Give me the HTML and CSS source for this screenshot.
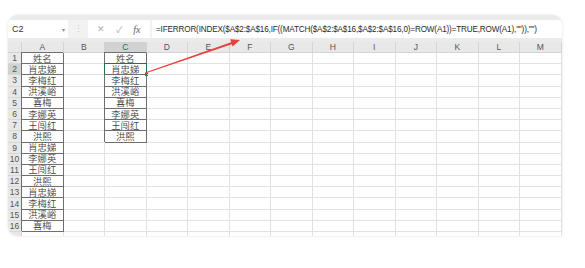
FILE: index.html
```html
<!DOCTYPE html>
<html lang="zh">

<head>
    <meta charset="UTF-8">
    <title>Excel - 去重公式</title>
    <link rel="stylesheet" href="styles.css">
</head>

<body>
    <div class="page">
        <div class="sheet">
            <div class="toolbar">
                <div class="namebox"><span>C2</span><span class="caret">▾</span></div>
                <div class="sep">⋮</div>
                <div class="fx-btns">
                    <span class="btn">✕</span>
                    <span class="btn">✓</span>
                    <span class="fx">fx</span>
                </div>
                <div class="formula">=IFERROR(INDEX($A$2:$A$16,IF((MATCH($A$2:$A$16,$A$2:$A$16,0)=ROW(A1))=TRUE,ROW(A1),"")),"")</div>
            </div>
            <div class="grid" id="grid">
                <!-- cells built below -->
            </div>
        </div>

        <svg class="arrow" width="585" height="268" viewBox="0 0 585 268">
            <polygon points="145,72.6 231.8,42.1 232.4,44.1 145.3,73.6" fill="#e5403b" />
            <polygon points="240,40 232.6,46.6 230.2,39.3" fill="#e5403b" />
        </svg>
    </div>

    <script>
        const cols = ['A', 'B', 'C', 'D', 'E', 'F', 'G', 'H', 'I', 'J', 'K', 'L', 'M'];
        const colA = ['姓名', '肖忠娣', '李梅红', '洪溪峪', '喜梅', '李娜英', '王闯红', '洪熙',
            '肖忠娣', '李娜英', '王闯红', '洪熙', '肖忠娣', '李梅红', '洪溪峪', '喜梅'];
        const colC = ['姓名', '肖忠娣', '李梅红', '洪溪峪', '喜梅', '李娜英', '王闯红', '洪熙'];

        const grid = document.getElementById('grid');

        function addCell(cls, text) {
            const cell = document.createElement('div');
            cell.className = cls;
            if (text) cell.textContent = text;
            grid.appendChild(cell);
            return cell;
        }

        // header row
        addCell('corner');
        cols.forEach(c => addCell(c === 'C' ? 'col-head active' : 'col-head', c));

        // rows 1..16, plus an empty sliver of row 17 at the sheet edge
        for (let r = 1; r <= 17; r++) {
            addCell(r === 2 ? 'row-head active' : 'row-head', r <= 16 ? String(r) : '');
            cols.forEach(c => {
                let cls = 'cell';
                let text = '';
                if (c === 'A' && r <= 16) {
                    cls += ' boxed';
                    text = colA[r - 1];
                }
                if (c === 'C' && r <= 8) {
                    cls += ' boxed';
                    text = colC[r - 1];
                }
                const cell = addCell(cls, text);
                if (c === 'C' && r === 2) {
                    const sel = document.createElement('span');
                    sel.className = 'selection';
                    cell.appendChild(sel);
                }
            });
        }
    </script>
</body>

</html>
```

FILE: styles.css
```css
body {
    margin: 0;
    background: #fff;
    font-family: 'Liberation Sans', 'Noto Sans CJK SC', sans-serif;
}

.page {
    position: relative;
    width: 585px;
    height: 268px;
    padding: 15px 0 0 8px;
    box-sizing: border-box;
}

.sheet {
    width: 554px;
    height: 221px;
    padding-top: 5px;
    box-sizing: border-box;
    background: #ebebeb;
    border-radius: 10px 10px 0 10px;
    overflow: hidden;
    box-shadow: 0 0 3px rgba(0, 0, 0, 0.12);
}

/* formula bar */
.toolbar {
    display: flex;
    height: 18px;
    background: #f2f2f2;
    font-size: 9px;
    color: #333;
}

.namebox {
    width: 60px;
    display: flex;
    align-items: center;
    justify-content: space-between;
    padding: 0 3px 0 4px;
    box-sizing: border-box;
    background: #fff;
}

.caret {
    font-size: 6px;
    color: #888;
}

.sep {
    width: 20px;
    display: flex;
    align-items: center;
    justify-content: center;
    color: #c8c8c8;
    font-size: 9px;
}

.fx-btns {
    width: 62px;
    display: flex;
    align-items: center;
    justify-content: space-around;
    padding: 0 4px;
    box-sizing: border-box;
    background: #fff;
    color: #b0b0b0;
    font-size: 9px;
}

.fx {
    font-family: 'Liberation Serif', serif;
    font-style: italic;
    color: #666;
    font-size: 10px;
}

.formula {
    flex: 1;
    margin-left: 2px;
    display: flex;
    align-items: center;
    padding-left: 4px;
    background: #fff;
    font-size: 8.15px;
    letter-spacing: -0.15px;
    white-space: nowrap;
    overflow: hidden;
    color: #2a2a2a;
}

/* grid */
.grid {
    margin-top: 4px;
    display: grid;
    grid-template-columns: 14px repeat(13, 41.5px);
    grid-template-rows: 11px repeat(17, 11.2px);
    background: #fff;
    font-size: 9px;
}

.corner,
.col-head,
.row-head {
    background: #e8e8e8;
    color: #555;
    display: flex;
    align-items: center;
    justify-content: center;
    box-sizing: border-box;
    line-height: 8px;
}

.corner {
    border-right: 1px solid #d4d4d4;
    border-bottom: 1px solid #d4d4d4;
}

.col-head {
    border-right: 1px solid #d4d4d4;
    border-bottom: 1px solid #d4d4d4;
    font-size: 8.5px;
}

.row-head {
    border-bottom: 1px solid #d8d8d8;
    border-right: 1px solid #d4d4d4;
    font-size: 8.5px;
}

.col-head.active {
    background: #d2d2d2;
    border-bottom: 1px solid #217346;
    color: #217346;
}

.row-head.active {
    background: #d2d2d2;
    border-right: 1px solid #217346;
    color: #217346;
}

.cell {
    position: relative;
    border-right: 1px solid #e2e2e2;
    border-bottom: 1px solid #e2e2e2;
    box-sizing: border-box;
    display: flex;
    align-items: center;
    justify-content: center;
    font-family: 'Noto Sans CJK SC', sans-serif;
    font-size: 9.3px;
    font-weight: 350;
    line-height: 9px;
    color: #444;
}

.cell.boxed {
    border-right-color: #6e6e6e;
    border-bottom-color: #6e6e6e;
    box-shadow: -1px -1px 0 #6e6e6e;
}

.selection {
    position: absolute;
    left: -1px;
    top: -1px;
    right: -1px;
    bottom: -1px;
    border: 1.5px solid #217346;
}

.selection::after {
    content: '';
    position: absolute;
    right: -3px;
    bottom: -3px;
    width: 3px;
    height: 3px;
    background: #217346;
    border: 1px solid #fff;
}

.arrow {
    position: absolute;
    left: 0;
    top: 0;
    pointer-events: none;
}
```
